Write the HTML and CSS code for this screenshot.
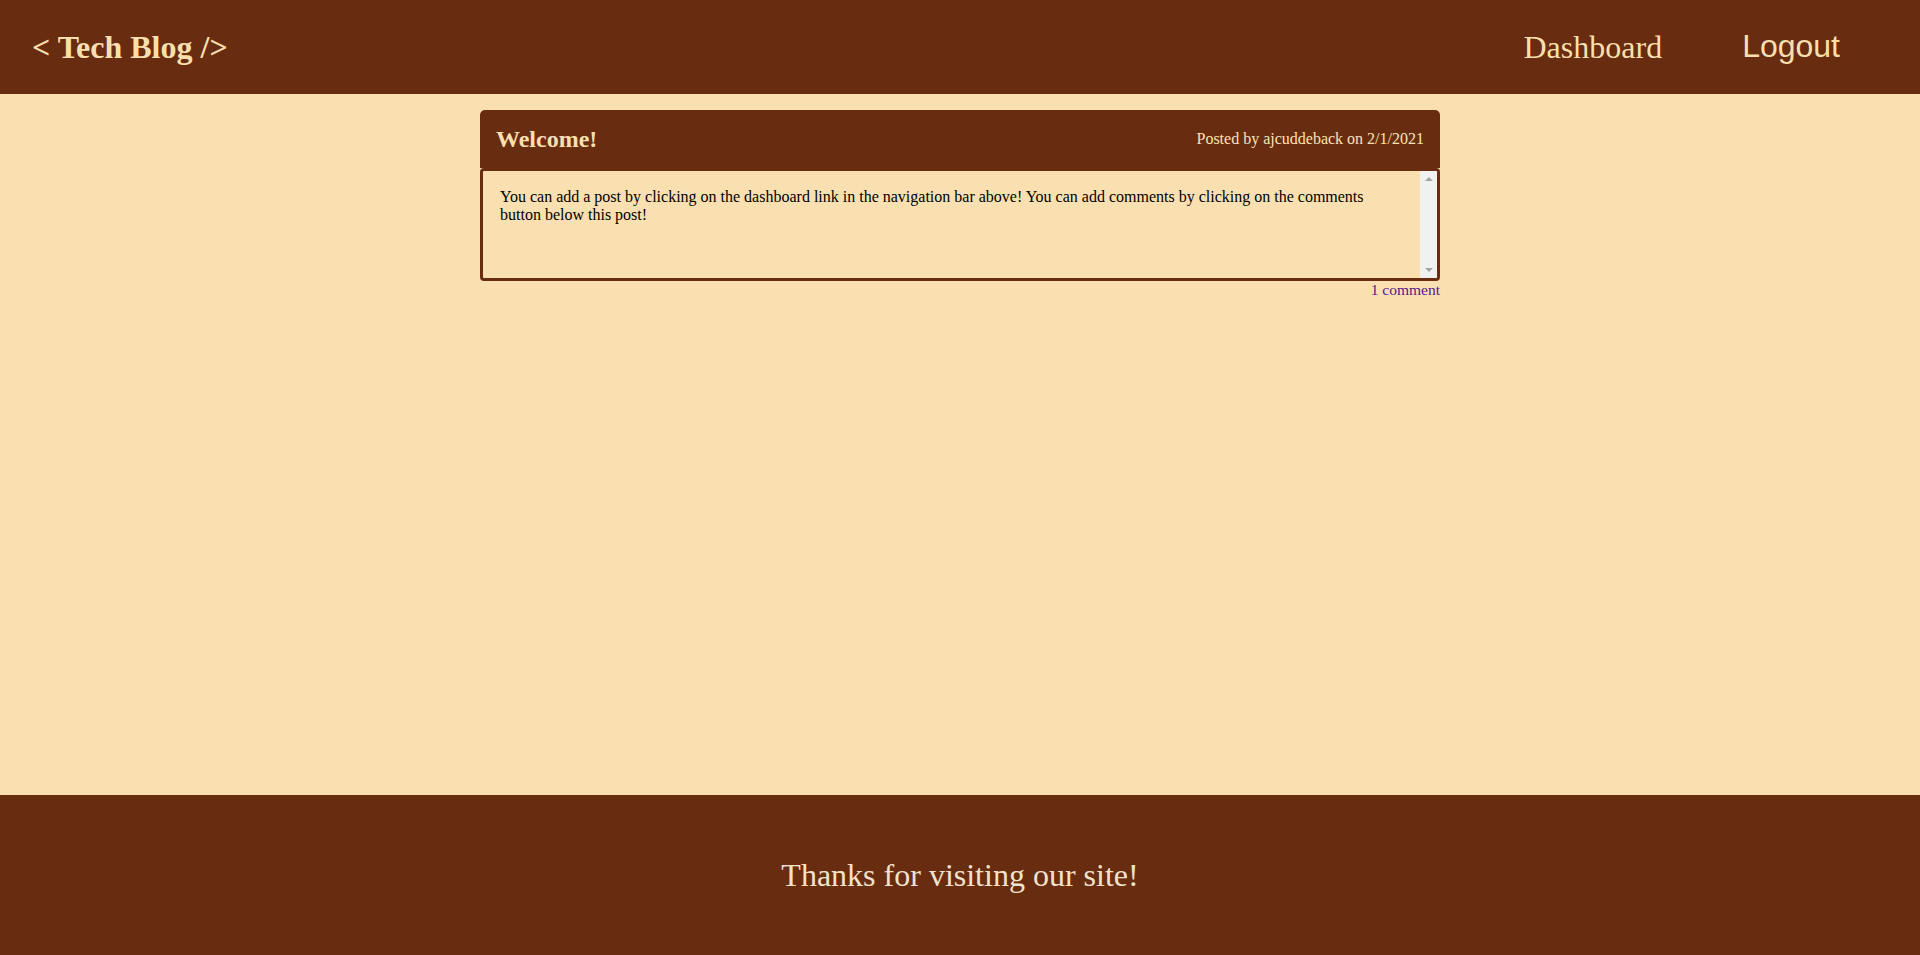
FILE: index.html
```html
<!DOCTYPE html>
<html lang="en">
<head>
<meta charset="utf-8">
<title>Tech Blog</title>
<link rel="stylesheet" href="styles.css">
</head>
<body>
<header class="site-header">
  <a class="logo" href="#">&lt; Tech Blog /&gt;</a>
  <nav class="nav">
    <a class="nav-link" href="#">Dashboard</a>
    <button class="logout" type="button">Logout</button>
  </nav>
</header>
<main class="main">
  <article class="post">
    <div class="post-head">
      <h2 class="post-title">Welcome!</h2>
      <span class="post-meta">Posted by ajcuddeback on 2/1/2021</span>
    </div>
    <div class="post-body">
      <textarea class="post-text" readonly>You can add a post by clicking on the dashboard link in the navigation bar above! You can add comments by clicking on the comments button below this post!</textarea>
      <div class="scrollbar" aria-hidden="true">
        <span class="arrow arrow-up"></span>
        <span class="arrow arrow-down"></span>
      </div>
    </div>
    <div class="post-foot"><a class="comment-link" href="#">1 comment</a></div>
  </article>
</main>
<footer class="site-footer">
  <p class="footer-text">Thanks for visiting our site!</p>
</footer>
</body>
</html>
```
FILE: styles.css
```css
html, body {
  height: 100%;
}
body {
  margin: 0;
  background: #fae0b0;
  font-family: "Liberation Serif", "Times New Roman", serif;
  display: flex;
  flex-direction: column;
  min-height: 955px;
}
.site-header {
  background: #682c10;
  height: 94px;
  display: flex;
  align-items: center;
  justify-content: space-between;
  padding: 0 80px 0 32px;
  flex-shrink: 0;
}
.logo {
  color: #fadfae;
  font-size: 32px;
  font-weight: bold;
  text-decoration: none;
  line-height: 37px;
}
.nav {
  display: flex;
  align-items: center;
  gap: 80px;
}
.nav-link {
  color: #fadfae;
  font-size: 32px;
  text-decoration: none;
  line-height: 37px;
}
.logout {
  background: none;
  border: none;
  padding: 0;
  margin: -2px 0 0;
  color: #fadfae;
  font-family: "Liberation Sans", Arial, sans-serif;
  font-size: 32px;
  line-height: 37px;
  cursor: pointer;
}
.main {
  flex: 1;
  display: flex;
  flex-direction: column;
  align-items: center;
  padding-top: 16px;
}
.post {
  width: 960px;
  display: flex;
  flex-direction: column;
}
.post-head {
  background: #682c10;
  border-radius: 5px 5px 0 0;
  height: 58px;
  padding: 0 16px;
  display: flex;
  align-items: center;
  justify-content: space-between;
  box-sizing: border-box;
}
.post-title {
  margin: 0;
  color: #fadfae;
  font-size: 24px;
  font-weight: bold;
  line-height: 27px;
}
.post-meta {
  color: #fce3b6;
  font-size: 16px;
}
.post-body {
  display: flex;
  box-sizing: border-box;
  height: 113px;
  border: 3px solid #682c10;
  border-radius: 4px;
  background: #fae0b0;
  overflow: hidden;
}
.post-text {
  flex: 1;
  display: block;
  box-sizing: border-box;
  height: 100%;
  margin: 0;
  border: none;
  background: transparent;
  color: #000;
  font-family: "Liberation Serif", "Times New Roman", serif;
  font-size: 16px;
  line-height: 17.6px;
  padding: 17px 20px 15px 17px;
  resize: none;
  overflow: hidden;
  outline: none;
}
.scrollbar {
  width: 17px;
  flex-shrink: 0;
  background: #f1f1f1;
  display: flex;
  flex-direction: column;
  justify-content: space-between;
  align-items: center;
  padding: 6px 0;
  box-sizing: border-box;
}
.arrow {
  display: block;
  width: 0;
  height: 0;
  border-left: 4px solid transparent;
  border-right: 4px solid transparent;
}
.arrow-up {
  border-bottom: 4px solid #a3a3a3;
}
.arrow-down {
  border-top: 4px solid #a3a3a3;
}
.post-foot {
  display: flex;
  justify-content: flex-end;
}
.comment-link {
  color: #551a8b;
  font-size: 15.5px;
  text-decoration: none;
  line-height: 18px;
}
.site-footer {
  background: #682c10;
  height: 160px;
  display: flex;
  align-items: center;
  justify-content: center;
  flex-shrink: 0;
}
.footer-text {
  margin: 0;
  color: #f2e2cc;
  font-size: 32px;
  line-height: 37px;
}
```
